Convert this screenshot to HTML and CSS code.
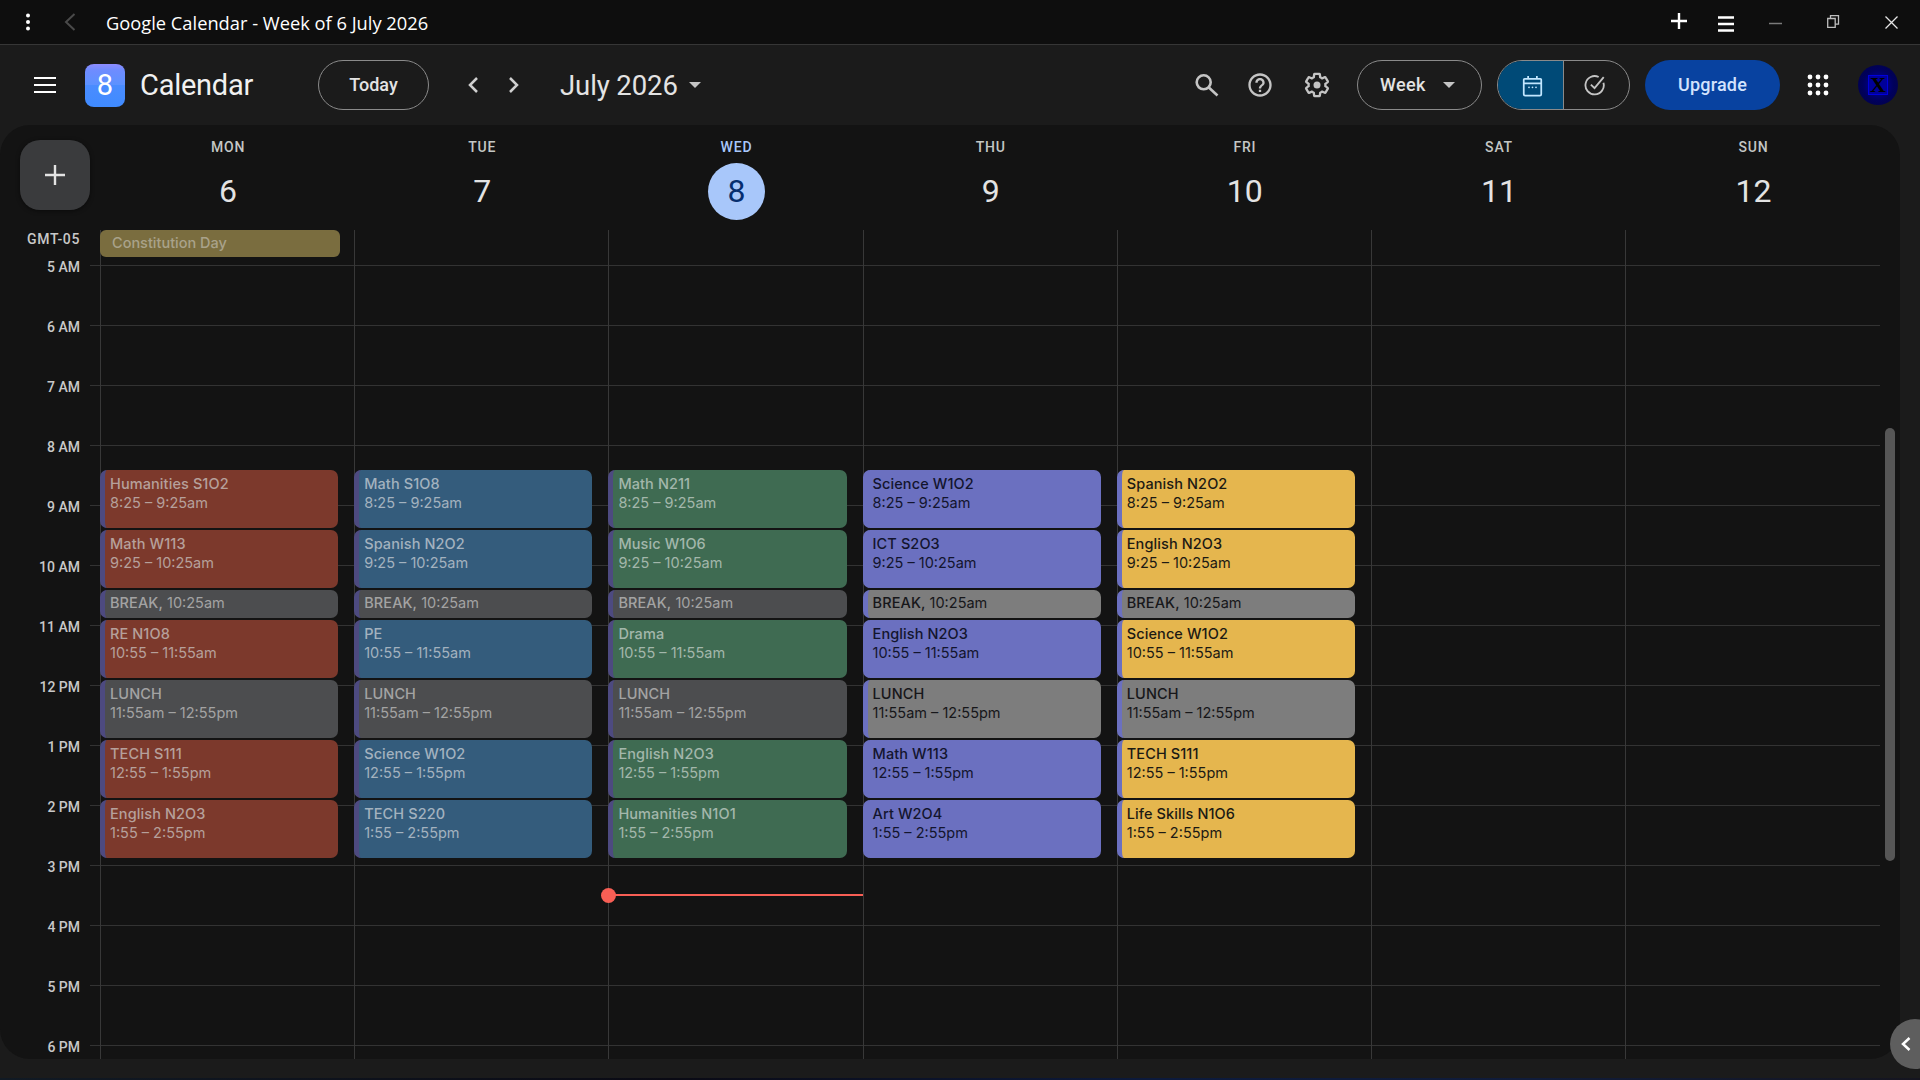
FILE: index.html
```html
<!DOCTYPE html>
<html lang="en">
<head>
<meta charset="utf-8">
<title>Google Calendar - Week of 6 July 2026</title>
<link rel="stylesheet" href="styles.css">
</head>
<body>
<header class="titlebar">
  <svg class="tb-dots" width="6" height="18" viewBox="0 0 6 18"><circle cx="3" cy="2.5" r="2" /><circle cx="3" cy="9" r="2" /><circle cx="3" cy="15.5" r="2" /></svg>
  <svg class="tb-back" width="12" height="18" viewBox="0 0 12 18"><path d="M10.5 1 2 9l8.5 8" /></svg>
  <span class="tb-title">Google Calendar - Week of 6 July 2026</span>
  <div class="tb-controls">
    <svg class="tb-plus" width="18" height="18" viewBox="0 0 18 18"><path d="M9 1v16M1 9h16" /></svg>
    <svg class="tb-menu" width="16" height="16" viewBox="0 0 16 16"><path d="M0 1.5h16M0 8h16M0 14.5h16" /></svg>
    <svg class="tb-min" width="13" height="13" viewBox="0 0 13 13"><path d="M0 6.5h13" /></svg>
    <svg class="tb-restore" width="13" height="13" viewBox="0 0 13 13"><path d="M.7 3.5h7.5v8.8H.7zM3.5 3.5V.7h8v8.5H8.2" /></svg>
    <svg class="tb-close" width="13" height="13" viewBox="0 0 13 13"><path d="M.5.5l12 12M12.5.5l-12 12" /></svg>
  </div>
</header>

<nav class="toolbar">
  <div class="hamburger"><i></i><i></i><i></i></div>
  <div class="logo"><span>8</span></div>
  <span class="brand">Calendar</span>
  <button class="pill today">Today</button>
  <svg class="nav-prev chev" width="20" height="24" viewBox="0 0 20 24"><path d="M14 5l-7 7 7 7" /></svg>
  <svg class="nav-next chev" width="20" height="24" viewBox="0 0 20 24"><path d="M6 5l7 7-7 7" /></svg>
  <span class="month">July 2026</span>
  <i class="caret month-caret"></i>
  <div class="tools">
    <div class="icons">
      <svg class="ic-search" width="28" height="28" viewBox="0 0 28 28"><circle cx="12.7" cy="11.3" r="7" /><path d="M17.8 16.5 26.5 24.5" /></svg>
      <svg class="ic-help" width="28" height="28" viewBox="0 0 24 24"><path d="M11 18h2v-2h-2v2zm1-16C6.48 2 2 6.48 2 12s4.48 10 10 10 10-4.48 10-10S17.52 2 12 2zm0 18c-4.41 0-8-3.59-8-8s3.59-8 8-8 8 3.59 8 8-3.59 8-8 8zm0-14c-2.21 0-4 1.79-4 4h2c0-1.1.9-2 2-2s2 .9 2 2c0 2-3 1.75-3 5h2c0-2.25 3-2.5 3-5 0-2.21-1.79-4-4-4z" /></svg>
      <svg class="ic-gear" width="28" height="28" viewBox="0 0 24 24"><path class="gear-o" d="M19.14 12.94c.04-.3.06-.61.06-.94 0-.32-.02-.64-.07-.94l2.03-1.58c.18-.14.23-.41.12-.61l-1.92-3.32c-.12-.22-.37-.29-.59-.22l-2.39.96c-.5-.38-1.03-.7-1.62-.94l-.36-2.54c-.04-.24-.24-.41-.48-.41h-3.84c-.24 0-.43.17-.47.41l-.36 2.54c-.59.24-1.13.57-1.62.94l-2.39-.96c-.22-.08-.47 0-.59.22L2.74 8.87c-.12.21-.08.47.12.61l2.03 1.58c-.05.3-.09.63-.09.94s.02.64.07.94l-2.03 1.58c-.18.14-.23.41-.12.61l1.92 3.32c.12.22.37.29.59.22l2.39-.96c.5.38 1.03.7 1.62.94l.36 2.54c.05.24.24.41.48.41h3.84c.24 0 .44-.17.47-.41l.36-2.54c.59-.24 1.13-.56 1.62-.94l2.39.96c.22.08.47 0 .59-.22l1.92-3.32c.12-.22.07-.47-.12-.61l-2.01-1.58z" /><circle class="gear-c" cx="12" cy="12" r="3" /></svg>
    </div>
    <button class="pill week">Week<i class="caret"></i></button>
    <div class="toggle">
      <div class="tg tg-on"><svg width="21" height="23" viewBox="0 0 24 26"><path d="M3 5.5h18a1 1 0 0 1 1 1V23a1.5 1.5 0 0 1-1.5 1.5h-17A1.5 1.5 0 0 1 2 23V6.500a1 1 0 0 1 1-1zM2 10.500h20M7 2v4M17 2v4" /><circle class="dot" cx="8" cy="15" r="1" /><circle class="dot" cx="12" cy="15" r="1" /><circle class="dot" cx="16" cy="15" r="1" /></svg></div>
      <div class="tg tg-off"><svg width="22" height="22" viewBox="0 0 24 24"><path d="M21.200 9.500A10 10 0 1 1 16 3.300M7.500 11.500l4 4L21.500 3.500" /></svg></div>
    </div>
    <button class="upgrade">Upgrade</button>
    <svg class="apps" width="24" height="24" viewBox="0 0 24 24"><circle cx="4" cy="4" r="2.400" /><circle cx="12" cy="4" r="2.400" /><circle cx="20" cy="4" r="2.400" /><circle cx="4" cy="12" r="2.400" /><circle cx="12" cy="12" r="2.400" /><circle cx="20" cy="12" r="2.400" /><circle cx="4" cy="20" r="2.400" /><circle cx="12" cy="20" r="2.400" /><circle cx="20" cy="20" r="2.400" /></svg>
    <div class="avatar"><span>X</span></div>
  </div>
</nav>

<main class="panel">
  <div class="head">
    <div class="add-cell"><button class="add"><svg width="22" height="22" viewBox="0 0 22 22"><path d="M11 1v20M1 11h20" /></svg></button></div>
    <div class="dh"><span class="dn">MON</span><span class="dd">6</span></div>
    <div class="dh"><span class="dn">TUE</span><span class="dd">7</span></div>
    <div class="dh today-h"><span class="dn">WED</span><span class="dd">8</span></div>
    <div class="dh"><span class="dn">THU</span><span class="dd">9</span></div>
    <div class="dh"><span class="dn">FRI</span><span class="dd">10</span></div>
    <div class="dh"><span class="dn">SAT</span><span class="dd">11</span></div>
    <div class="dh"><span class="dn">SUN</span><span class="dd">12</span></div>
  </div>
  <div class="grid">
    <div class="gutter">
      <div class="gmt">GMT-05</div>
      <div class="hours">
        <span>5 AM</span><span>6 AM</span><span>7 AM</span><span>8 AM</span><span>9 AM</span><span>10 AM</span><span>11 AM</span><span>12 PM</span><span>1 PM</span><span>2 PM</span><span>3 PM</span><span>4 PM</span><span>5 PM</span><span>6 PM</span>
      </div>
    </div>

    <section class="day">
      <div class="allday"><div class="chip">Constitution Day</div></div>
      <div class="events">
        <div class="ev red"><b>Humanities S1O2</b><span>8:25 – 9:25am</span></div>
        <div class="ev red"><b>Math W113</b><span>9:25 – 10:25am</span></div>
        <div class="ev short dim-grey"><b>BREAK,</b> 10:25am</div>
        <div class="ev red"><b>RE N1O8</b><span>10:55 – 11:55am</span></div>
        <div class="ev dim-grey"><b>LUNCH</b><span>11:55am – 12:55pm</span></div>
        <div class="ev red"><b>TECH S111</b><span>12:55 – 1:55pm</span></div>
        <div class="ev red"><b>English N2O3</b><span>1:55 – 2:55pm</span></div>
      </div>
    </section>

    <section class="day">
      <div class="allday"></div>
      <div class="events">
        <div class="ev blue"><b>Math S1O8</b><span>8:25 – 9:25am</span></div>
        <div class="ev blue"><b>Spanish N2O2</b><span>9:25 – 10:25am</span></div>
        <div class="ev short dim-grey"><b>BREAK,</b> 10:25am</div>
        <div class="ev blue"><b>PE</b><span>10:55 – 11:55am</span></div>
        <div class="ev dim-grey"><b>LUNCH</b><span>11:55am – 12:55pm</span></div>
        <div class="ev blue"><b>Science W1O2</b><span>12:55 – 1:55pm</span></div>
        <div class="ev blue"><b>TECH S220</b><span>1:55 – 2:55pm</span></div>
      </div>
    </section>

    <section class="day day-now">
      <div class="allday"></div>
      <div class="events">
        <div class="ev green"><b>Math N211</b><span>8:25 – 9:25am</span></div>
        <div class="ev green"><b>Music W1O6</b><span>9:25 – 10:25am</span></div>
        <div class="ev short dim-grey"><b>BREAK,</b> 10:25am</div>
        <div class="ev green"><b>Drama</b><span>10:55 – 11:55am</span></div>
        <div class="ev dim-grey"><b>LUNCH</b><span>11:55am – 12:55pm</span></div>
        <div class="ev green"><b>English N2O3</b><span>12:55 – 1:55pm</span></div>
        <div class="ev green"><b>Humanities N1O1</b><span>1:55 – 2:55pm</span></div>
      </div>
      <div class="now"></div>
    </section>

    <section class="day">
      <div class="allday"></div>
      <div class="events">
        <div class="ev lav"><b>Science W1O2</b><span>8:25 – 9:25am</span></div>
        <div class="ev lav"><b>ICT S2O3</b><span>9:25 – 10:25am</span></div>
        <div class="ev short grey"><b>BREAK,</b> 10:25am</div>
        <div class="ev lav"><b>English N2O3</b><span>10:55 – 11:55am</span></div>
        <div class="ev grey"><b>LUNCH</b><span>11:55am – 12:55pm</span></div>
        <div class="ev lav"><b>Math W113</b><span>12:55 – 1:55pm</span></div>
        <div class="ev lav"><b>Art W2O4</b><span>1:55 – 2:55pm</span></div>
      </div>
    </section>

    <section class="day">
      <div class="allday"></div>
      <div class="events">
        <div class="ev yellow"><b>Spanish N2O2</b><span>8:25 – 9:25am</span></div>
        <div class="ev yellow"><b>English N2O3</b><span>9:25 – 10:25am</span></div>
        <div class="ev short grey"><b>BREAK,</b> 10:25am</div>
        <div class="ev yellow"><b>Science W1O2</b><span>10:55 – 11:55am</span></div>
        <div class="ev grey"><b>LUNCH</b><span>11:55am – 12:55pm</span></div>
        <div class="ev yellow"><b>TECH S111</b><span>12:55 – 1:55pm</span></div>
        <div class="ev yellow"><b>Life Skills N1O6</b><span>1:55 – 2:55pm</span></div>
      </div>
    </section>

    <section class="day"></section>
    <section class="day"></section>
  </div>
  <div class="scrollbar"></div>
</main>
<div class="strip"></div>
<button class="side"><svg width="12" height="16" viewBox="0 0 12 16"><path d="M9.500 2 3 8l6.500 6" /></svg></button>
</body>
</html>
```

FILE: styles.css
```css
* { box-sizing: border-box; }
html, body { height: 100%; }
body {
  margin: 0;
  width: 1920px;
  height: 1080px;
  overflow: hidden;
  position: relative;
  display: flex;
  flex-direction: column;
  background: #1b1b1b;
  color: #e3e3e3;
  font-family: Roboto, "Liberation Sans", sans-serif;
}
button { font: inherit; color: inherit; background: none; border: 0; padding: 0; }
svg { display: block; flex: none; }
i { display: block; font-style: normal; }

/* window title bar */
.titlebar {
  height: 45px;
  flex: none;
  display: flex;
  align-items: center;
  background: #0e0e0e;
  border-bottom: 1px solid #363636;
  padding-left: 25px;
}
.tb-dots { fill: #fff; margin-top: -1px; }
.tb-back { fill: none; stroke: #4a4a4a; stroke-width: 2; margin-left: 33px; margin-top: -1px; }
.tb-title { margin-left: 30px; font: 18.3px "Open Sans", sans-serif; color: #fff; width: 400px; white-space: nowrap; }
.tb-controls { margin-left: auto; display: flex; align-items: center; padding-right: 22px; }
.tb-plus { fill: none; stroke: #fff; stroke-width: 2.4; margin-top: -3px; }
.tb-menu { fill: none; stroke: #fff; stroke-width: 2.600; margin-left: 30px; margin-top: 3px; }
.tb-min { fill: none; stroke: #7a7a7a; stroke-width: 1.500; margin-left: 35.5px; margin-top: 2px; }
.tb-restore { fill: none; stroke: #bdbdbd; stroke-width: 1.300; margin-left: 45px; margin-top: -1px; }
.tb-close { fill: none; stroke: #e6e6e6; stroke-width: 1.300; margin-left: 45px; margin-top: 1px; }

/* app toolbar */
.toolbar {
  height: 80px;
  flex: none;
  display: flex;
  align-items: center;
  padding: 0 22px 0 34px;
}
.hamburger { width: 22px; display: flex; flex-direction: column; gap: 4.5px; }
.hamburger i { height: 2.500px; background: #fff; }
.logo {
  width: 40px;
  height: 43px;
  margin-left: 29px;
  display: flex;
  align-items: center;
  justify-content: center;
  border-radius: 9px / 8px;
  background: linear-gradient(#8e8cff 0, #6f8cff 14%, #5b92ff 50%, #4a8cff 50%, #3f8bff 100%);
  color: #fff;
  font-size: 29px;
}
.brand { margin-left: 15px; width: 178px; font-size: 29px; color: #f1f1f1; letter-spacing: -0.25px; }
.pill { height: 50px; border: 1.500px solid #8a8a8a; border-radius: 25px; font-size: 18px; font-weight: 500; color: #e3e3e3; padding-bottom: 1px; }
.today { width: 111px; }
.chev { fill: none; stroke: #d0d0d0; stroke-width: 2.500; }
.nav-prev { margin-left: 34px; }
.nav-next { margin-left: 21px; }
.month { margin-left: 36px; font-size: 27.5px; color: #e3e3e3; white-space: nowrap; letter-spacing: -0.1px; }
.caret { width: 0; height: 0; border: 6px solid transparent; border-bottom: 0; border-top: 6px solid #c4c4c4; }
.month-caret { margin-left: 11px; }
.tools { margin-left: auto; display: flex; align-items: center; }
.icons { display: flex; gap: 28px; }
.ic-search { fill: none; stroke: #c4c4c4; stroke-width: 2.600; }
.ic-help { fill: #c4c4c4; margin-left: -1px; }
.ic-gear { margin-left: 1px; }
.gear-o { fill: none; stroke: #c4c4c4; stroke-width: 2; }
.gear-c { fill: #c4c4c4; }
.week { width: 125px; margin-left: 26px; display: flex; align-items: center; justify-content: center; gap: 17px; padding-right: 4px; letter-spacing: .4px; }
.toggle { width: 133px; height: 50px; margin-left: 15px; display: flex; border: 1.500px solid #8a8a8a; border-radius: 25px; overflow: hidden; }
.tg { flex: 1; display: flex; align-items: center; justify-content: center; }
.tg svg { fill: none; stroke: #c4c4c4; stroke-width: 2; }
.tg-on { background: #004a77; border-right: 1.500px solid #8a8a8a; padding-left: 4px; }
.tg-on svg { stroke: #c2e7ff; }
.tg-on .dot { fill: #c2e7ff; stroke: none; }
.tg-off { padding-right: 4px; }
.upgrade { width: 135px; height: 50px; margin-left: 15px; padding-bottom: 1px; border-radius: 25px; background: #0842a0; color: #d3e3fd; font-size: 18px; font-weight: 500; letter-spacing: .2px; }
.apps { margin-left: 26px; fill: #fff; }
.avatar {
  width: 40px;
  height: 40px;
  margin-left: 28px;
  border-radius: 50%;
  display: flex;
  align-items: center;
  justify-content: center;
  background: radial-gradient(circle, #0000a8 0, #00005c 55%, #04043c 100%);
}
.avatar span {
  width: 20px;
  height: 20px;
  border: 1px solid #0000dc;
  background: #00009a;
  color: #000;
  font: bold 22px/18px "Liberation Serif", serif;
  text-align: center;
}

/* calendar panel */
.panel {
  width: 1900px;
  height: 934px;
  flex: none;
  position: relative;
  display: flex;
  flex-direction: column;
  background: #131313;
  border-radius: 30px;
  overflow: hidden;
}
.head { height: 105px; flex: none; display: grid; grid-template-columns: 100px repeat(6, 254.2px) 254.8px; }
.add-cell { padding: 15px 0 0 20px; }
.add {
  width: 70px;
  height: 70px;
  border-radius: 20px;
  display: flex;
  align-items: center;
  justify-content: center;
  background: #3a3b3d;
  box-shadow: 0 1px 4px rgba(0,0,0,.5);
}
.add svg { fill: none; stroke: #e3e3e3; stroke-width: 2.400; }
.dh { display: flex; flex-direction: column; align-items: center; padding-top: 13px; padding-left: 2px; }
.dn { font-size: 14px; line-height: 18px; font-weight: 500; letter-spacing: .8px; color: #c4c7c5; }
.dd { width: 57px; height: 57px; margin-top: 7px; padding-bottom: 2px; border-radius: 50%; display: flex; align-items: center; justify-content: center; font-size: 32px; color: #e3e3e3; }
.today-h .dn { color: #a8c7fa; }
.today-h .dd { background: #a8c7fa; color: #062e6f; padding-bottom: 1px; }

.grid { flex: 1; display: grid; grid-template-columns: 100px repeat(6, 254.2px) 254.8px; }
.gutter {
  background: linear-gradient(#333 1px, transparent 1px) 90px 35px / 10px 60px repeat-y;
  padding-right: 20px;
  text-align: right;
  font-size: 14px;
  font-weight: 500;
  color: #c8c8c8;
}
.gmt { height: 18px; line-height: 18px; letter-spacing: .65px; }
.hours { margin-top: 10px; display: flex; flex-direction: column; }
.hours span { height: 60px; line-height: 18px; }

.day {
  position: relative;
  padding-right: 16px;
  background:
    linear-gradient(90deg, #383838 1px, transparent 1px),
    linear-gradient(#333 1px, transparent 1px) 0 35px / 100% 60px repeat-y;
}
.allday { height: 240px; }
.chip {
  height: 27px;
  margin-right: -2px;
  padding-left: 12px;
  border-radius: 6px;
  background: #7a6d3f;
  color: #a9a28a;
  font: 500 14.5px/26px Inter, sans-serif;
}
.events { display: flex; flex-direction: column; gap: 2px; }
.ev {
  height: 58px;
  padding: 4px 0 0 5px;
  border-radius: 7px;
  border-left: 5px solid #4d4a80;
  font: 14.5px/19px Inter, sans-serif;
  white-space: nowrap;
}
.ev b, .ev span { display: block; }
.ev b { font-weight: 500; letter-spacing: .1px; }
.ev.short { height: 28px; line-height: 26px; padding-top: 0; }
.ev.short b { display: inline; }
.red { background: #7c392c; color: #b6a09b; }
.blue { background: #345c7c; color: #a3b2bf; }
.green { background: #3f6b52; color: #a3b7ab; }
.dim-grey { background: #4c4d4f; color: #a3a3a3; }
.lav { background: #6b70c0; border-left-color: #6b70c0; color: #13152e; }
.yellow { background: #e5b64e; border-left-color: #6b70c0; color: #1c1a14; }
.grey { background: #7d7d7d; border-left-color: #6b70c0; color: #17171a; }
.now { position: absolute; left: 0; right: 0; top: 664px; height: 2px; background: #f85f55; }
.now::before { content: ""; position: absolute; left: -7.500px; top: -6.500px; width: 15px; height: 15px; border-radius: 50%; background: #f85f55; }
.scrollbar { position: absolute; left: 1885px; top: 303px; width: 10px; height: 433px; border-radius: 5px; background: #565656; }
.strip { height: 2px; position: absolute; left: 0; right: 0; bottom: 0; background: linear-gradient(90deg, #111a24 0, #0a0a14 35%, #0c1a3c 60%, #101c3a 80%, #15151f 100%); }
.side {
  position: absolute;
  left: 1890px;
  top: 1019px;
  width: 50px;
  height: 50px;
  padding-left: 10px;
  border-radius: 50%;
  background: #5e5e5e;
}
.side svg { fill: none; stroke: #fff; stroke-width: 2.500; }
```
